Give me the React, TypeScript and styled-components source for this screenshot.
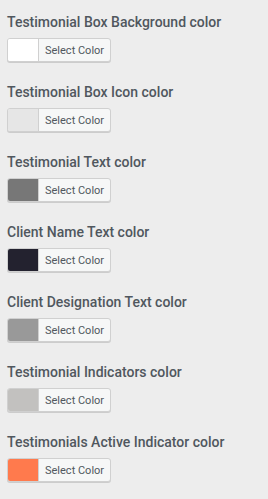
import React, { FC } from 'react';
import styled, { createGlobalStyle } from 'styled-components';

const GlobalStyle = createGlobalStyle`
    html, body{
        margin: 0;
        padding: 0;
        background: #ededed;
    }
    body{
        font-family: Roboto, "Liberation Sans", sans-serif;
    }
`;

interface IColorOption {
    label: string;
    color: string;
}

const options: IColorOption[] = [
    { label: 'Testimonial Box Background color', color: '#ffffff' },
    { label: 'Testimonial Box Icon color', color: '#e6e6e6' },
    { label: 'Testimonial Text color', color: '#777777' },
    { label: 'Client Name Text color', color: '#23222f' },
    { label: 'Client Designation Text color', color: '#999999' },
    { label: 'Testimonial Indicators color', color: '#c2c1bf' },
    { label: 'Testimonials Active Indicator color', color: '#ff7a4d' },
];

const ColorControl: FC<IColorOption> = ({ label, color }) => (
    <Control>
        <Title>{label}</Title>
        <PickerButton type="button">
            <Swatch swatch={color} />
            <PickerText>Select Color</PickerText>
        </PickerButton>
    </Control>
);

const App: FC = () => (
    <>
        <GlobalStyle />
        <Panel>
            {options.map(option => (
                <ColorControl key={option.label} label={option.label} color={option.color} />
            ))}
        </Panel>
    </>
);

const Panel = styled.div`
    display: flex;
    flex-direction: column;
    gap: 20px;
    padding: 12px 7px 17px;
    min-height: 499px;
    box-sizing: border-box;
`;
const Control = styled.div`
    display: flex;
    flex-direction: column;
    align-items: flex-start;
    gap: 6px;
`;
const Title = styled.span`
    display: block;
    font-size: 14px;
    line-height: 20px;
    font-weight: 500;
    color: #50575e;
    white-space: nowrap;
`;
const PickerButton = styled.button`
    display: flex;
    align-items: stretch;
    height: 24px;
    padding: 0;
    margin: 0;
    border: 1px solid #d0d0d0;
    border-radius: 3px;
    background: #f6f7f7;
    box-shadow: 0 1px 0 #cccccc;
    overflow: hidden;
    cursor: pointer;
    box-sizing: border-box;
`;
const Swatch = styled.span<{ swatch: string }>`
    display: block;
    width: 30px;
    background: ${props => props.swatch};
    border-right: 1px solid #d0d0d0;
`;
const PickerText = styled.span`
    display: flex;
    align-items: center;
    padding: 0 6px 0 6px;
    font-family: Roboto, "Liberation Sans", sans-serif;
    font-size: 11px;
    color: #50575e;
    white-space: nowrap;
`;

export default App;
